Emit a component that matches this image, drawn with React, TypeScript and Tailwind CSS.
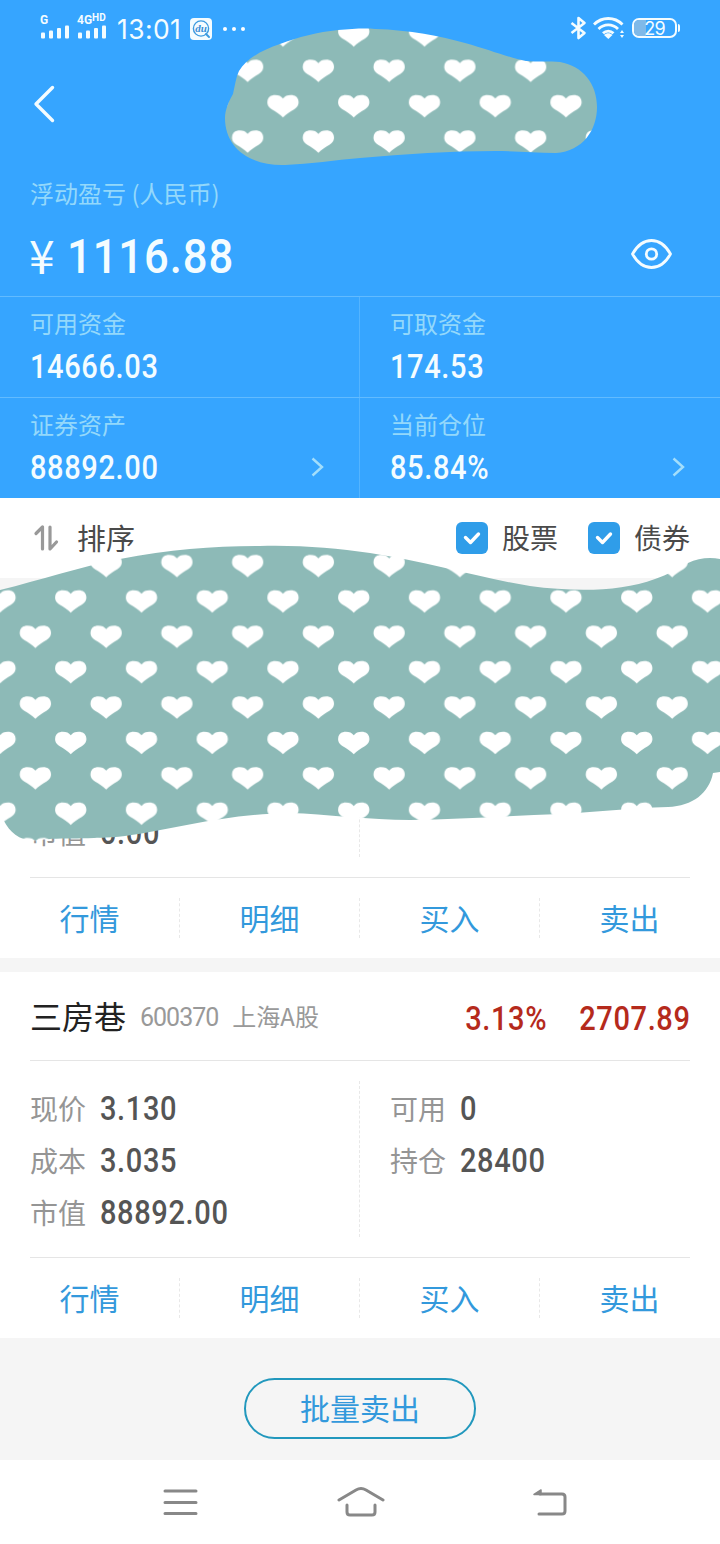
import React from 'react';

type Field = { label: string; value: string };

type Holding = {
  name?: string;
  code?: string;
  market?: string;
  percent?: string;
  profit?: string;
  left: Field[];
  right: Field[];
};

const ACTIONS = ['行情', '明细', '买入', '卖出'];

const holdings: Holding[] = [
  {
    left: [
      { label: '', value: '' },
      { label: '', value: '' },
      { label: '市值', value: '0.00' },
    ],
    right: [],
  },
  {
    name: '三房巷',
    code: '600370',
    market: '上海A股',
    percent: '3.13%',
    profit: '2707.89',
    left: [
      { label: '现价', value: '3.130' },
      { label: '成本', value: '3.035' },
      { label: '市值', value: '88892.00' },
    ],
    right: [
      { label: '可用', value: '0' },
      { label: '持仓', value: '28400' },
    ],
  },
];

// Narrow, widely tracked figures.
const Num: React.FC<{ className?: string; children?: React.ReactNode }> = ({ className = '', children }) => (
  <span
    className={`inline-block scale-x-[0.88] font-[Roboto,sans-serif] text-[33px] leading-none font-medium tracking-[0.7px] whitespace-nowrap ${className}`}
  >
    {children}
  </span>
);

const Signal: React.FC<{ label: React.ReactNode }> = ({ label }) => (
  <div className="flex flex-col w-[30px] -mt-[4px]">
    <div className="h-[10px] text-[12px] leading-[10px] font-bold whitespace-nowrap">{label}</div>
    <svg width="30" height="14" viewBox="0 0 30 14" fill="currentColor">
      <rect x="1" y="7.5" width="4" height="6" rx="1" />
      <rect x="9" y="5.5" width="4" height="8" rx="1" />
      <rect x="17" y="3" width="4" height="10.5" rx="1" />
      <rect x="25" y="0.5" width="4" height="13" rx="1" />
    </svg>
  </div>
);

const StatusBar: React.FC = () => (
  <div className="flex items-center h-[57px] pl-10 pr-10 font-[Roboto,sans-serif]">
    <div className="flex gap-[7px]">
      <Signal label="G" />
      <Signal
        label={
          <>
            4G<span className="relative -top-[3px] text-[10px]">HD</span>
          </>
        }
      />
    </div>
    <div className="w-[66px] ml-[10px] font-[Inter,sans-serif] text-[26.5px] leading-none tracking-[0.4px] pt-[2px] whitespace-nowrap">
      13:01
    </div>
    <svg className="ml-[7px]" width="22" height="22" viewBox="0 0 22 22">
      <rect width="22" height="22" rx="4" fill="#f4fcff" />
      <circle cx="11" cy="10.5" r="7.6" fill="none" stroke="#3c9be0" strokeWidth="1.4" />
      <path d="M16 16l3 3" stroke="#3c9be0" strokeWidth="2" strokeLinecap="round" />
      <text x="11" y="14" textAnchor="middle" fontSize="11" fontWeight="700" fontStyle="italic" fontFamily="Liberation Serif" fill="#3c8fd6">
        du
      </text>
    </svg>
    <div className="flex gap-[5px] ml-[11px]">
      <i className="size-1 rounded-full bg-white" />
      <i className="size-1 rounded-full bg-white" />
      <i className="size-1 rounded-full bg-white" />
    </div>
    <svg className="ml-auto -mt-[1px]" width="17" height="24" viewBox="0 0 17 24" fill="none" stroke="#f4fcff" strokeWidth="2.6">
      <path d="M1.500 7L14.500 17l-6 5V2l6 5L1.500 17" strokeLinejoin="round" />
    </svg>
    <svg className="ml-[6px] mr-px -mt-[2px]" width="32" height="24" viewBox="0 0 32 24" fill="none" stroke="#f4fcff" strokeWidth="2.8">
      <path d="M1 8.5C9 .5 21.500 .5 29.500 8.500M5.500 13C11 7.500 19.500 7.500 25 13M10 17.200C13 14.300 17.500 14.300 20.500 17.200" />
      <path d="M11 19c2.500-2.200 6-2.200 8.500 0l-4.200 4z" fill="#f4fcff" stroke="none" />
      <path d="M27 17l2-3 2 3zM27 19l2 3 2-3z" fill="#f4fcff" stroke="none" />
    </svg>
    <div className="flex items-center ml-[6px] -mt-[1px]">
      <div className="relative flex items-center justify-center w-[45px] h-[20px] rounded-[7px] border-2 border-[#f4fcff] overflow-hidden">
        <div className="absolute left-0 inset-y-0 w-[12px] bg-[#7fb9e8]" />
        <span className="relative text-[18px] leading-none font-[Inter,sans-serif] tracking-[-0.8px] pt-px">29</span>
      </div>
      <i className="w-[2px] h-[8px] ml-[1px] rounded-r bg-[#f4fcff]" />
    </div>
  </div>
);

const Metric: React.FC<Field & { arrow?: boolean }> = ({ label, value, arrow }) => (
  <div className="flex items-end justify-between h-[100px] pl-[30px] pr-[35px] pb-[11px]">
    <div>
      <div className="h-[34px] text-2xl leading-[34px] text-[#93d8fb]">{label}</div>
      <div className="flex items-center h-10 mt-[6px]">
        <Num className="origin-left">{value}</Num>
      </div>
    </div>
    {arrow && (
      <svg className="mb-[10px]" width="13" height="20" viewBox="0 0 13 20" fill="none" stroke="#a3defb" strokeWidth="2.4">
        <path d="M1.500 1.500L11 10l-9.500 8.500" />
      </svg>
    )}
  </div>
);

const CheckItem: React.FC<{ label: string }> = ({ label }) => (
  <label className="flex items-center">
    <span className="flex items-center justify-center size-8 rounded-md bg-[#2f9de9]">
      <svg width="18" height="14" viewBox="0 0 18 14" fill="none" stroke="#fff" strokeWidth="3.4" strokeLinecap="round" strokeLinejoin="round">
        <path d="M2.500 6.500l5 5 8-8.500" />
      </svg>
    </span>
    <span className="ml-[14px] -mt-[2px] text-[28px] leading-8 text-[#4a4a4a]">{label}</span>
  </label>
);

const FieldColumn: React.FC<{ fields: Field[] }> = ({ fields }) => (
  <div className="flex flex-col shrink-0 w-[300px] pt-[21px]">
    {fields.map((field, i) => (
      <div key={i} className="flex items-center h-[52px]">
        <span className="w-[70px] text-[28px] leading-none text-[#959595]">{field.label}</span>
        <Num className="origin-left text-[#555]">{field.value}</Num>
      </div>
    ))}
  </div>
);

const DashedLine: React.FC<{ className: string }> = ({ className }) => (
  <div className={`w-px shrink-0 border-l border-dashed border-[#e8e8e8] ${className}`} />
);

const HoldingCard: React.FC<{ holding: Holding }> = ({ holding }) => (
  <section className="h-[366px] px-[30px] bg-white">
    <div className="flex items-center h-[89px] pt-1 border-b border-[#e5e5e5]">
      <span className="-mt-[6px] text-[32px] leading-none text-[#222]">{holding.name}</span>
      <span className="-mt-[2px] ml-[14px] font-[Roboto,sans-serif] text-[25px] leading-none tracking-[-1px] text-[#999]">
        {holding.code}
      </span>
      <span className="-mt-[5px] ml-[14px] text-2xl leading-none text-[#999]">{holding.market}</span>
      <Num className="ml-auto origin-right text-[#b52a1c]">{holding.percent}</Num>
      <Num className="ml-[17px] -mr-px origin-right text-[#b52a1c]">{holding.profit}</Num>
    </div>
    <div className="flex h-[197px] border-b border-[#e5e5e5]">
      <div className="w-[330px] shrink-0">
        <FieldColumn fields={holding.left} />
      </div>
      <DashedLine className="-ml-px my-5" />
      <div className="pl-[30px]">
        <FieldColumn fields={holding.right} />
      </div>
    </div>
    <div className="flex items-center h-20 -mx-[30px]">
      {ACTIONS.map((action, i) => (
        <React.Fragment key={action}>
          {i > 0 && <DashedLine className="-ml-px h-10" />}
          <button className="w-[180px] pb-[2px] pr-px text-[30px] leading-none text-[#3399dc]">{action}</button>
        </React.Fragment>
      ))}
    </div>
  </section>
);

// Heart patterned patches that hide private account data.
const PrivacyPatches: React.FC = () => (
  <svg className="absolute inset-0 pointer-events-none" width="720" height="1544" viewBox="0 0 720 1544">
    <defs>
      <path
        id="heart"
        d="M0 11.5C-3 8-7 6-11 3.500C-15 1-16-2-15.500-5C-15-9-12-11-8-11C-4-11-2-10 0-7.500C2-10 4-11 8-11C12-11 15-9 15.500-5C16-2 15 1 11 3.500C7 6 3 8 0 11.500Z"
      />
      <pattern id="hearts" x="-17.7" y="88.3" width="70.75" height="70.75" patternUnits="userSpaceOnUse">
        <rect width="71" height="71" fill="#8dbab7" />
        <g fill="#fff">
          <use href="#heart" x="17.7" y="17.7" />
          <use href="#heart" x="53.1" y="53.1" />
        </g>
      </pattern>
    </defs>
    <path
      fill="url(#hearts)"
      d="M225 118C225 110 229 101 233 94C235 85 236 77 239 71C246 59 262 50 280 44C298 37 318 32 338 30C352 29 364 28 375 29C410 30 440 36 465 43C490 50 510 58 526 61C538 62 550 61 560 62C583 66 597 84 597 107C597 130 583 151 556 153C535 153 515 151 495 151C450 151 405 154 360 158C335 160 310 164 285 165C250 166 225 148 225 118Z"
    />
    <path
      fill="url(#hearts)"
      d="M0 590C40 580 80 567 120 559C170 549 215 546 260 546C300 545 335 548 370 553C430 562 480 578 530 586C575 592 620 592 655 579C668 574 678 570 688 563C698 558 710 557 720 559V772L713 773C709 793 693 806 668 807C630 808 595 812 560 814C510 816 460 819 410 820C370 820 325 814 290 813C225 814 180 828 125 836C90 840 60 837 40 840C22 843 10 833 4 821L0 818Z"
    />
  </svg>
);

const App: React.FC = () => {
  return (
    <div
      lang="zh-CN"
      className="relative w-[720px] h-[1544px] overflow-hidden bg-[#f5f5f5] font-['Noto_Sans_CJK_SC',sans-serif]"
    >
      <header className="h-[498px] bg-[#36a5ff] text-[#f4fcff]">
        <StatusBar />
        <div className="flex items-center h-[94px] pl-8">
          <svg width="24" height="38" viewBox="0 0 24 38" fill="none" stroke="currentColor" strokeWidth="3.400" strokeLinecap="round" strokeLinejoin="round">
            <path d="M20.500 2.500L4 19l16.500 16.500" />
          </svg>
        </div>
        <div className="h-[145px] pl-[30px] pr-12 pt-[25px]">
          <div className="h-[34px] text-2xl leading-[34px] text-[#93d8fb]">浮动盈亏 (人民币)</div>
          <div className="flex items-center justify-between h-[92px]">
            <div className="flex items-center leading-none">
              <span className="w-[38px] -ml-px -mt-[4px] text-[46px]">¥</span>
              <span className="inline-block origin-left scale-x-[0.89] font-[Roboto,sans-serif] text-[49px] font-medium tracking-[1px]">
                1116.88
              </span>
            </div>
            <svg className="-mt-[5px]" width="41" height="30" viewBox="0 0 41 30" fill="none" stroke="currentColor" strokeWidth="2.800">
              <path d="M1.500 15C6 7 12 1.500 20.500 1.500S35 7 39.500 15C35 23 29 28.500 20.500 28.500S6 23 1.500 15Z" strokeLinejoin="round" />
              <circle cx="20.500" cy="15" r="5.200" />
            </svg>
          </div>
        </div>
        <div className="grid grid-cols-[360px_360px] border-t border-[#62bbff]">
          <div className="border-r border-[#54b4ff]">
            <Metric label="可用资金" value="14666.03" />
          </div>
          <Metric label="可取资金" value="174.53" />
        </div>
        <div className="grid grid-cols-[360px_360px] border-t border-[#62bbff]">
          <div className="border-r border-[#54b4ff]">
            <Metric label="证券资产" value="88892.00" arrow />
          </div>
          <Metric label="当前仓位" value="85.84%" arrow />
        </div>
      </header>

      <div className="flex items-center h-20 px-[30px] bg-white">
        <svg className="ml-[3px]" width="26" height="28" viewBox="0 0 26 28" fill="none" stroke="#999" strokeWidth="3.200" strokeLinejoin="round" strokeLinecap="round">
          <path d="M3 9.500L9.500 3v22M17 3v22l6.500-7" />
        </svg>
        <span className="ml-[18px] -mt-[2px] text-[29px] leading-8 text-[#4a4a4a]">排序</span>
        <div className="flex gap-[30px] ml-auto">
          <CheckItem label="股票" />
          <CheckItem label="债券" />
        </div>
      </div>

      <main className="flex flex-col gap-[14px] mt-[14px]">
        {holdings.map((holding, i) => (
          <HoldingCard key={i} holding={holding} />
        ))}
      </main>

      <div className="flex justify-center h-[122px] pt-10">
        <button className="w-[232px] h-[61px] pb-[3px] rounded-full border-2 border-[#2298bd] text-[30px] leading-none text-[#3399dc]">
          批量卖出
        </button>
      </div>

      <nav className="flex items-center justify-between h-[84px] px-[162px] bg-white">
        <svg width="36" height="28" viewBox="0 0 36 28" stroke="#888" strokeWidth="3" strokeLinecap="round">
          <path d="M3 3h31M3 14.500h31M3 25.500h31" />
        </svg>
        <svg className="ml-[-9px]" width="50" height="32" viewBox="0 0 50 32" fill="none" stroke="#888" strokeWidth="3" strokeLinecap="round" strokeLinejoin="round">
          <path d="M3 14L20 4q5-3 10 0l17 10M11 19v7q0 3 3 3h22q3 0 3-3v-7" />
        </svg>
        <svg className="-mr-[10px]" width="36" height="28" viewBox="0 0 36 28" fill="none" stroke="#888" strokeWidth="3" strokeLinecap="round">
          <path d="M8 6h22q3 0 3 3v14q0 3-3 3H7" />
          <path d="M2 6.500l7-4.500v4.500z" fill="#888" strokeWidth="1.500" strokeLinejoin="round" />
        </svg>
      </nav>

      <PrivacyPatches />
    </div>
  );
};

export default App;
